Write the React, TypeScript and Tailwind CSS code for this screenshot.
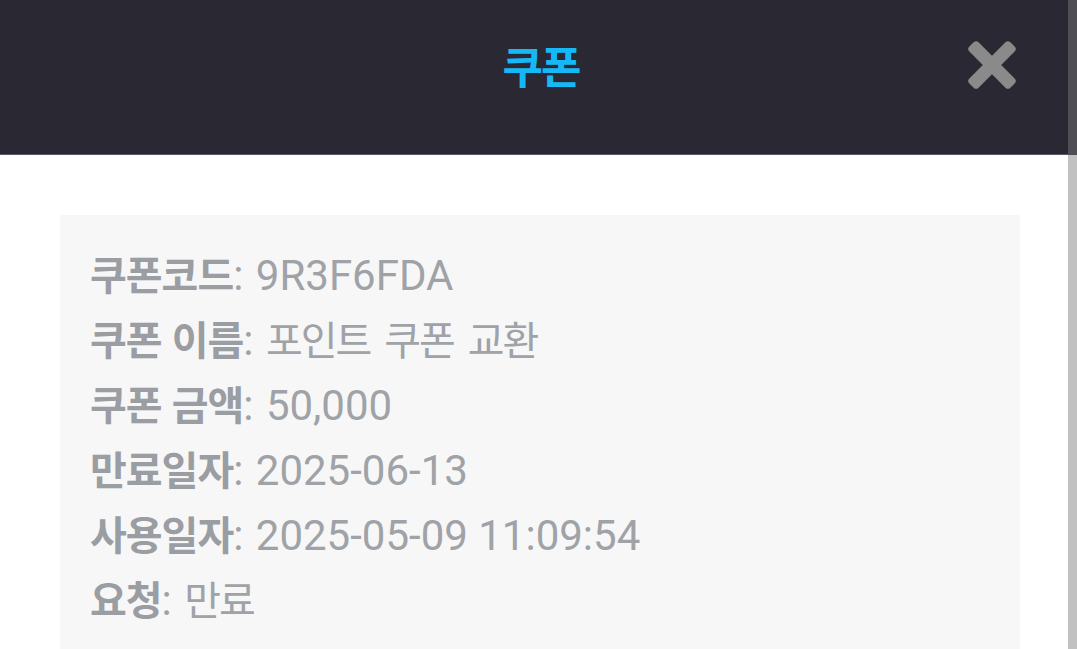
// 쿠폰 상세 화면
const rows: { label: string; value: string; ko?: boolean }[] = [
  { label: '쿠폰코드', value: '9R3F6FDA' },
  { label: '쿠폰 이름', value: '포인트 쿠폰 교환', ko: true },
  { label: '쿠폰 금액', value: '50,000' },
  { label: '만료일자', value: '2025-06-13' },
  { label: '사용일자', value: '2025-05-09 11:09:54' },
  { label: '요청', value: '만료', ko: true },
]

function CloseIcon() {
  return (
    <svg width="50" height="50" viewBox="0 0 50 50">
      <g fill="#8a8a8a" transform="rotate(45 25 25)">
        <rect x="-4" y="18.5" width="58" height="13" rx="3.5" />
        <rect x="18.5" y="-4" width="13" height="58" rx="3.5" />
      </g>
    </svg>
  )
}

export default function App() {
  return (
    <div className="flex h-[649px] w-full overflow-hidden bg-white" style={{ fontFamily: 'Roboto, "Noto Sans CJK KR", sans-serif' }}>
      <div className="flex min-w-0 flex-1 flex-col">
        {/* 헤더 */}
        <div className="h-[155px] shrink-0 border-b border-[#5a5960] bg-[#2a2933]">
          <div className="grid h-[130px] grid-cols-[1fr_auto_1fr] items-center">
            <div />
            <h1 className="ml-[14px] text-[44px] font-bold leading-none tracking-[-2px] text-[#16b9f7]" style={{ fontFamily: '"Noto Sans CJK KR", sans-serif' }}>
              쿠폰
            </h1>
            <div className="flex justify-end pr-[51px]">
              <CloseIcon />
            </div>
          </div>
        </div>

        {/* 쿠폰 정보 */}
        <div className="ml-[60px] mr-[48px] mt-[60px] bg-[#f7f7f7] pb-12 pl-[30px] pt-[27px]">
          {rows.map((r) => (
            <div key={r.label} className="whitespace-nowrap text-[42px] leading-[63px] text-[#9fa2a7]">
              <span className="text-[40px] font-bold tracking-[-1px] [word-spacing:2px] text-[#9a9da2]" style={{ fontFamily: '"Noto Sans CJK KR", sans-serif' }}>
                {r.label}
              </span>
              <span className="pr-[2px]">: </span>
              {r.ko ? (
                <span className="text-[40px] tracking-[-2px] [word-spacing:7px]" style={{ fontFamily: '"Noto Sans CJK KR", sans-serif' }}>
                  {r.value}
                </span>
              ) : (
                <span>{r.value}</span>
              )}
            </div>
          ))}
        </div>
      </div>

      {/* 스크롤바 */}
      <div className="flex w-[9px] shrink-0 flex-col">
        <div className="h-[155px] bg-[#4f4e55]" />
        <div className="flex-1 bg-[#c1c1c1]" />
      </div>
    </div>
  )
}
